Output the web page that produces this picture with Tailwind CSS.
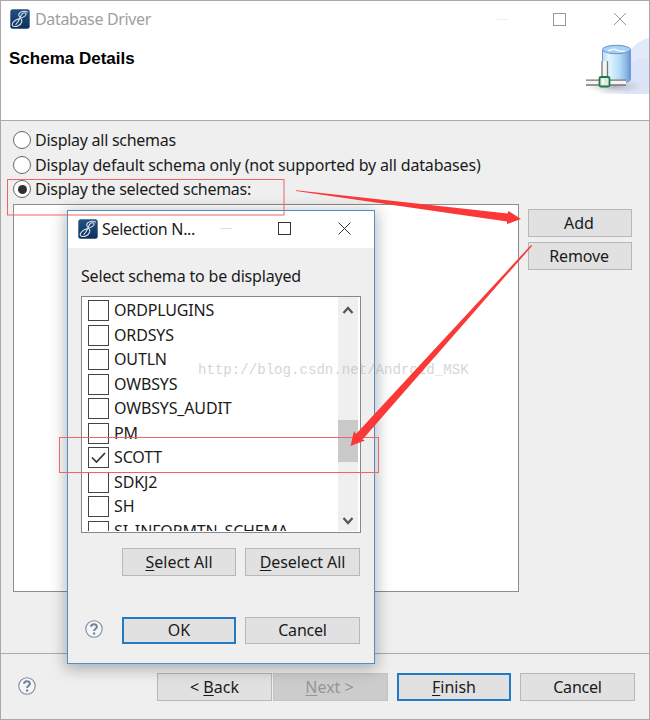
<!DOCTYPE html>
<html lang="en">
<head>
<meta charset="utf-8">
<title>Database Driver</title>
<script src="https://cdn.jsdelivr.net/npm/@tailwindcss/browser@4"></script>
</head>
<body class="bg-white">
<svg class="absolute size-0">
  <defs>
    <linearGradient id="navy" x1="0" y1="0" x2="0" y2="1"><stop offset="0" stop-color="#245084"/><stop offset="1" stop-color="#0d3059"/></linearGradient>
    <symbol id="logo" viewBox="0 0 20 20">
      <rect x="0.3" y="0.3" width="19.4" height="19.4" rx="2.5" fill="url(#navy)"/>
      <path d="M17.8 3.2C14.8 1.3 9.4 2.6 8.7 5.5C8.1 8.2 12.9 9.4 11.7 13C10.6 16.2 6.5 18.3 3.4 17.2C.8 16.1 2.8 12.4 6.4 10.7C9.5 9.2 15 8.5 16 5.6C16.7 3.3 13.2 2.8 11.4 5.7C9.8 8.4 9.1 12.9 5.5 15.9" fill="none" stroke="#d7e3ef" stroke-width="1.1"/>
    </symbol>
    <symbol id="help" viewBox="0 0 18 18">
      <circle cx="9" cy="9" r="8.2" fill="#f5f6f8" stroke="#7f899d" stroke-width="1.1"/>
      <path d="M6.1 6.8C6.1 3.4 11.9 3.4 11.9 6.7C11.9 8.8 9.1 8.7 9.1 11.1" fill="none" stroke="#71809d" stroke-width="2"/>
      <rect x="8" y="12.5" width="2.2" height="2.1" fill="#71809d"/>
    </symbol>
  </defs>
</svg>
<main class="relative flex h-[720px] w-[650px] flex-col overflow-hidden border border-[#a9a9a9] bg-[#efefef] font-['Noto_Sans','Open_Sans',sans-serif] text-[16px] leading-[24px] text-[#1b1b1b]">
  <header class="flex h-[120px] shrink-0 justify-between border-b border-[#aaa] bg-white">
    <div class="pl-[9px] pt-[8px]">
      <div class="flex h-[20px] items-center gap-[5px] text-[#a0a0a0]"><svg class="size-[20px]"><use href="#logo"/></svg><span class="tracking-[-0.35px]">Database Driver</span></div>
      <h1 class="-ml-[1px] mt-[18px] font-['Liberation_Sans',sans-serif] text-[17px] font-bold leading-[24px] text-black">Schema Details</h1>
    </div>
    <div class="flex w-[160px] flex-col items-end">
      <svg class="h-[36px] w-[160px] shrink-0" viewBox="489 1 160 36" fill="none" stroke="#999"><path d="M496 19.5h12" stroke="#eee"/><rect x="553.5" y="13.5" width="12" height="12"/><path d="M614 13l12 12M626 13l-12 12"/></svg>
      <svg class="h-[58px] w-[66px]" viewBox="583 37 66 58">
        <defs>
          <linearGradient id="cyl"><stop stop-color="#b1d8fa"/><stop offset=".22" stop-color="#e5f6ff"/><stop offset=".6" stop-color="#b6dcf7"/><stop offset=".85" stop-color="#8ab7e5"/><stop offset="1" stop-color="#6b92d1"/></linearGradient>
          <linearGradient id="sw" x1="0" x2="1"><stop stop-color="#e4ecfa" stop-opacity="0"/><stop offset=".6" stop-color="#e2e9f8"/></linearGradient>
          <radialGradient id="sh"><stop stop-color="#9e98ae" stop-opacity=".8"/><stop offset="1" stop-color="#bbb" stop-opacity="0"/></radialGradient>
        </defs>
        <path d="M631 50Q638 40 649 38V94H590Q615 91 625 75Z" fill="url(#sw)"/>
        <path d="M631 63Q640 57 649 58V94H625Z" fill="#d8e2f6" opacity=".7"/>
        <ellipse cx="614" cy="86" rx="29" ry="8" fill="url(#sh)"/>
        <path d="M602.5 50V80C606 84.5 626 85 630.5 80V50Z" fill="url(#cyl)" stroke="#6f9ad4"/>
        <ellipse cx="616.5" cy="49.5" rx="14" ry="4.2" fill="#a9d1f3" stroke="#6594cf"/>
        <path d="M608 51Q613 48 617 50T625 51" fill="none" stroke="#eaf7ff" stroke-width="1.5"/>
        <path d="M604.5 61V80M586 82.5H626" stroke="#f4f4f4" stroke-width="5"/>
        <path d="M602 61V78M607.500 61V78M586 80.200H626M586 85H626" stroke="#777" stroke-width="1.3"/>
        <rect x="599.500" y="77" width="10" height="9.500" rx="1.5" fill="#d9eed9" stroke="#22784d" stroke-width="1.8"/><path d="M603 79v5" stroke="#fff" stroke-width="2"/>
      </svg>
    </div>
  </header>
  <section class="h-[533px] shrink-0 border-b border-[#ababab] px-[12px] pt-[7px]">
    <div class="flex flex-col gap-[0.5px]">
      <div class="flex h-[24px] items-center gap-[4px]"><i class="size-[18px] rounded-full border border-[#666] bg-white"></i><span class="tracking-[-0.27px]">Display all schemas</span></div>
      <div class="flex h-[24px] items-center gap-[4px]"><i class="size-[18px] rounded-full border border-[#666] bg-white"></i><span class="tracking-[-0.17px]">Display default schema only (not supported by all databases)</span></div>
      <div class="flex h-[24px] items-center gap-[4px]"><i class="flex size-[18px] items-center justify-center rounded-full border border-[#666] bg-white"><b class="size-[9px] rounded-full bg-[#303030]"></b></i><span class="tracking-[-0.28px]">Display the selected schemas:</span></div>
    </div>
    <div class="flex gap-[9px] pt-[3px]">
      <div class="h-[388px] w-[506px] border border-[#8d8d8d] bg-white"></div>
      <div class="flex flex-col gap-[5px] pt-[5px] text-center">
        <div class="h-[28px] w-[104px] border border-[#b7b7b7] bg-[#e1e1e1] pr-[2px] leading-[26px]">Add</div>
        <div class="h-[28px] w-[104px] border border-[#b7b7b7] bg-[#e1e1e1] pr-[2px] leading-[26px] tracking-[-0.15px]">Remove</div>
      </div>
    </div>
  </section>
  <footer class="flex pl-[17px] pt-[19px] text-center">
    <svg class="mt-[4px] mr-[121px] size-[18px]"><use href="#help"/></svg>
    <div class="h-[28px] w-[115px] border border-[#b7b7b7] bg-[#e1e1e1] leading-[26px]">&lt; <u class="underline-offset-2">B</u>ack</div>
    <div class="ml-[1px] h-[28px] w-[115px] border border-[#c4c4c4] bg-[#cccccc] pr-[2px] leading-[26px] text-[#969696]"><u class="underline-offset-2">N</u>ext &gt;</div>
    <div class="ml-[9px] h-[28px] w-[114px] border-2 border-[#2479c4] bg-[#e1e1e1] leading-[24px]"><u class="underline-offset-2">F</u>inish</div>
    <div class="ml-[9px] h-[28px] w-[115px] border border-[#b7b7b7] bg-[#e1e1e1] leading-[26px] tracking-[-0.2px]">Cancel</div>
  </footer>

  <div class="absolute left-[66px] top-[209px] h-[454px] w-[308px] border border-[#4b90c8] bg-[#efefef] shadow-[0_3px_14px_2px_rgba(0,0,0,0.28)]">
    <div class="flex h-[37px] items-center bg-white pb-[2px] pl-[10px]">
      <svg class="size-[20px]"><use href="#logo"/></svg><span class="ml-[4px] w-[100px] whitespace-nowrap tracking-[-0.3px]">Selection N...</span>
      <svg class="ml-auto h-[35px] w-[160px]" viewBox="214 211 160 35" fill="none" stroke="#333"><path d="M220 228.500h12" stroke="#ddd"/><rect x="278.500" y="222.500" width="12" height="12"/><path d="M338.500 222.500l12 12M350.500 222.500l-12 12"/></svg>
    </div>
    <div class="h-[48px] pl-[13px] pt-[16px]"><span class="tracking-[-0.18px]">Select schema to be displayed</span></div>
    <div class="ml-[13px] flex h-[237px] w-[280px] overflow-hidden border border-[#828790] bg-white pr-[2px]">
      <div class="flex h-[234px] flex-1 flex-col gap-[3.5px] overflow-hidden pl-[6px] pt-[3px] leading-[21px] tracking-[-0.15px]">
        <div class="flex h-[21px] shrink-0 gap-[5px]"><i class="size-[21px] border border-[#444]"></i><span>ORDPLUGINS</span></div>
        <div class="flex h-[21px] shrink-0 gap-[5px]"><i class="size-[21px] border border-[#444]"></i><span>ORDSYS</span></div>
        <div class="flex h-[21px] shrink-0 gap-[5px]"><i class="size-[21px] border border-[#444]"></i><span>OUTLN</span></div>
        <div class="flex h-[21px] shrink-0 gap-[5px]"><i class="size-[21px] border border-[#444]"></i><span>OWBSYS</span></div>
        <div class="flex h-[21px] shrink-0 gap-[5px]"><i class="size-[21px] border border-[#444]"></i><span>OWBSYS_AUDIT</span></div>
        <div class="flex h-[21px] shrink-0 gap-[5px]"><i class="size-[21px] border border-[#444]"></i><span>PM</span></div>
        <div class="flex h-[21px] shrink-0 gap-[5px]"><i class="size-[21px] border border-[#444]"><svg viewBox="0 0 19 19" class="size-[19px]"><path d="M3 9.500l4.500 4.500L16 5" fill="none" stroke="#333" stroke-width="1.700"/></svg></i><span>SCOTT</span></div>
        <div class="flex h-[21px] shrink-0 gap-[5px]"><i class="size-[21px] border border-[#444]"></i><span>SDKJ2</span></div>
        <div class="flex h-[21px] shrink-0 gap-[5px]"><i class="size-[21px] border border-[#444]"></i><span>SH</span></div>
        <div class="flex h-[21px] shrink-0 gap-[5px]"><i class="size-[21px] border border-[#444]"></i><span>SI_INFORMTN_SCHEMA</span></div>
      </div>
      <div class="flex h-[234px] w-[20px] flex-col items-center bg-[#efefef]">
        <svg class="h-[123px] w-[20px]" viewBox="0 0 20 123"><path d="M5.500 16l4.500-5 4.500 5" fill="none" stroke="#555" stroke-width="2.200"/></svg>
        <div class="h-[42px] w-[20px] shrink-0 bg-[#cacaca]"></div>
        <svg class="h-[69px] w-[20px]" viewBox="0 0 20 69"><path d="M5.500 56l4.500 5 4.500-5" fill="none" stroke="#555" stroke-width="2.200"/></svg>
      </div>
    </div>
    <div class="flex gap-[9px] pl-[54px] pt-[15px] text-center">
      <div class="h-[28px] w-[114px] border border-[#b7b7b7] bg-[#e1e1e1] leading-[26px]"><u class="underline-offset-2">S</u>elect All</div>
      <div class="h-[28px] w-[115px] border border-[#b7b7b7] bg-[#e1e1e1] leading-[26px] tracking-[-0.1px]"><u class="underline-offset-2">D</u>eselect All</div>
    </div>
    <div class="flex pl-[17px] pt-[41px] text-center">
      <svg class="mr-[19px] mt-[3px] size-[18px]"><use href="#help"/></svg>
      <div class="h-[27px] w-[114px] border-2 border-[#2479c4] bg-[#e1e1e1] leading-[23px]">OK</div>
      <div class="ml-[9px] h-[27px] w-[115px] border border-[#b7b7b7] bg-[#e1e1e1] leading-[25px] tracking-[-0.2px]">Cancel</div>
    </div>
  </div>

  <div class="absolute left-[197px] top-[357px] font-['Liberation_Mono',monospace] text-[14.1px] text-[#aaa]/50">http://blog.csdn.net/Android_MSK</div>
  <svg class="absolute -left-px -top-px h-[720px] w-[650px]" viewBox="0 0 650 720">
    <g fill="none" stroke="#ed6565"><rect x="7.500" y="179.500" width="276.500" height="35.500"/><rect x="59.500" y="437.500" width="319" height="35"/></g>
    <path d="M296 190.300L507.500 213.500L508.500 211L521 219L507 224L507 221.500L296 191Z" fill="#fa3838"/>
    <path d="M531 245L356 434L354 431L350.500 446L365 440.500L362.500 439.500L532 246Z" fill="#fa3838"/>
  </svg>
</main>
</body>
</html>
